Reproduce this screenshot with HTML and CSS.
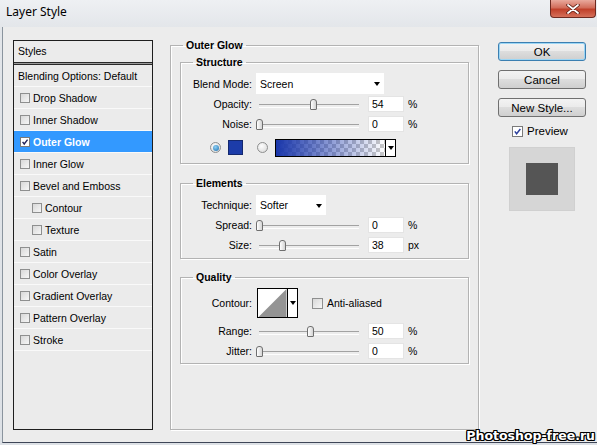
FILE: index.html
```html
<!DOCTYPE html>
<html>
<head>
<meta charset="utf-8">
<title>Layer Style</title>
<link rel="stylesheet" href="styles.css">
</head>
<body>
<div class="window">
  <div class="titlebar">
    <span class="title">Layer Style</span>
    <div class="close">
      <svg width="14" height="10" viewBox="0 0 14 10"><path d="M2 1 L12 9 M12 1 L2 9" stroke="#5a1a10" stroke-width="3.4" stroke-linecap="round"/><path d="M2 1 L12 9 M12 1 L2 9" stroke="#fff" stroke-width="1.8" stroke-linecap="round"/></svg>
    </div>
  </div>
  <div class="dialog">
    <div class="styles-panel">
      <div class="sp-head">Styles</div>
      <div class="sp-sep"></div>
      <div class="sp-row plain">Blending Options: Default</div>
      <div class="sp-row"><span class="cb"></span>Drop Shadow</div>
      <div class="sp-row"><span class="cb"></span>Inner Shadow</div>
      <div class="sp-row active"><span class="cb checked"><svg width="10" height="10" viewBox="0 0 10 10"><path d="M2 4.8 L4 7.5 L8.2 2" fill="none" stroke="#23235a" stroke-width="1.7"/></svg></span>Outer Glow</div>
      <div class="sp-row"><span class="cb"></span>Inner Glow</div>
      <div class="sp-row"><span class="cb"></span>Bevel and Emboss</div>
      <div class="sp-row sub"><span class="cb"></span>Contour</div>
      <div class="sp-row sub"><span class="cb"></span>Texture</div>
      <div class="sp-row"><span class="cb"></span>Satin</div>
      <div class="sp-row"><span class="cb"></span>Color Overlay</div>
      <div class="sp-row"><span class="cb"></span>Gradient Overlay</div>
      <div class="sp-row"><span class="cb"></span>Pattern Overlay</div>
      <div class="sp-row"><span class="cb"></span>Stroke</div>
    </div>

    <fieldset class="group main">
      <legend>Outer Glow</legend>
      <fieldset class="group sub structure">
        <legend>Structure</legend>
        <div class="row h21"><span class="lbl">Blend Mode:</span><div class="select blend">Screen<i class="arrow"></i></div></div>
        <div class="row"><span class="lbl">Opacity:</span><div class="slider"><i class="thumb" style="left:54px"></i></div><div class="num">54</div><span class="unit">%</span></div>
        <div class="row"><span class="lbl">Noise:</span><div class="slider"><i class="thumb" style="left:0px"></i></div><div class="num">0</div><span class="unit">%</span></div>
        <div class="row color-row">
          <span class="radio on"></span>
          <span class="swatch"></span>
          <span class="radio"></span>
          <span class="gradient"><span class="grad-fill"></span><span class="grad-arrow"><i class="arrow"></i></span></span>
        </div>
      </fieldset>
      <fieldset class="group sub elements">
        <legend>Elements</legend>
        <div class="row"><span class="lbl">Technique:</span><div class="select tech">Softer<i class="arrow"></i></div></div>
        <div class="row"><span class="lbl">Spread:</span><div class="slider"><i class="thumb" style="left:0px"></i></div><div class="num">0</div><span class="unit">%</span></div>
        <div class="row"><span class="lbl">Size:</span><div class="slider"><i class="thumb" style="left:23px"></i></div><div class="num">38</div><span class="unit">px</span></div>
      </fieldset>
      <fieldset class="group sub quality">
        <legend>Quality</legend>
        <div class="row h30"><span class="lbl">Contour:</span>
          <div class="contour">
            <svg width="30" height="30" viewBox="0 0 30 30"><rect width="30" height="30" fill="#fff"/><polygon points="0,30 30,0 30,30" fill="#949494"/></svg>
            <span class="contour-arrow"><i class="arrow"></i></span>
          </div>
          <span class="cb big"></span><span class="aa">Anti-aliased</span>
        </div>
        <div class="row range"><span class="lbl">Range:</span><div class="slider"><i class="thumb" style="left:51px"></i></div><div class="num">50</div><span class="unit">%</span></div>
        <div class="row"><span class="lbl">Jitter:</span><div class="slider"><i class="thumb" style="left:0px"></i></div><div class="num">0</div><span class="unit">%</span></div>
      </fieldset>
    </fieldset>

    <div class="actions">
      <div class="btn default">OK</div>
      <div class="btn">Cancel</div>
      <div class="btn">New Style...</div>
      <div class="preview-check"><span class="cb big checked"><svg width="11" height="11" viewBox="0 0 11 11"><path d="M2.2 5.4 L4.4 8.2 L9 2.4" fill="none" stroke="#2c3f9c" stroke-width="1.8"/></svg></span>Preview</div>
      <div class="preview-box"><div class="preview-square"></div></div>
    </div>
  </div>
  <div class="watermark">Photoshop-free.ru</div>
</div>
</body>
</html>
```

FILE: styles.css
```css
* { box-sizing: border-box; }
html, body { margin: 0; padding: 0; }
body {
  width: 597px;
  height: 445px;
  overflow: hidden;
  font-family: "Liberation Sans", Arial, sans-serif;
  font-size: 10.5px;
  color: #000;
  background: #e3e6ea;
}
.window {
  width: 597px;
  height: 445px;
  position: relative;
  display: flex;
  flex-direction: column;
  background: linear-gradient(to bottom, #eef0f3 0, #e2e5e9 30px, #dde1e6 100%);
}
.titlebar {
  height: 27px;
  flex: none;
  display: flex;
  align-items: flex-start;
  padding-left: 6px;
}
.title {
  font-family: "Noto Sans", "Liberation Sans", sans-serif;
  font-size: 12px;
  line-height: 24px;
  color: #000;
}
.close {
  margin-left: auto;
  margin-right: 1px;
  width: 46px;
  height: 18px;
  border: 1px solid #6e2a20;
  border-top: none;
  border-radius: 0 0 4px 4px;
  background: linear-gradient(to bottom, #e9a99c 0%, #d26d5a 45%, #c0402a 55%, #d5705a 100%);
  display: flex;
  align-items: center;
  justify-content: center;
}
.dialog {
  flex: 1;
  margin-left: 2px;
  margin-bottom: 2px;
  border-left: 1px solid #8a949e;
  border-bottom: 1px solid #3f4658;
  background: #ececec;
  display: flex;
  align-items: flex-start;
  padding: 13px 0 0 10px;
}

/* Styles list */
.styles-panel {
  width: 140px;
  height: 390px;
  flex: none;
  border: 1px solid #1e1e1e;
  background: #ebebeb;
}
.sp-head {
  height: 21px;
  line-height: 21px;
  padding-left: 4px;
}
.sp-sep {
  height: 3px;
  border-top: 1px solid #2a2a2a;
  border-bottom: 1px solid #2a2a2a;
  background: #9a9a9a;
}
.sp-row {
  height: 22px;
  display: flex;
  align-items: center;
  padding-left: 6px;
  border-bottom: 1px solid #f9f9f9;
  white-space: nowrap;
}
.sp-row.plain { padding-left: 4px; }
.sp-row.sub { padding-left: 18px; }
.sp-row.active {
  background: #3399ff;
  color: #fff;
  font-weight: bold;
}
.cb {
  width: 10px;
  height: 10px;
  flex: none;
  margin-right: 3px;
  border: 1px solid #8e8f8f;
  background: linear-gradient(135deg, #d8d8d8, #f6f6f6);
  display: inline-flex;
  align-items: center;
  justify-content: center;
}
.cb.checked { background: #fff; border-color: #7a7a7a; }
.cb.big { width: 11px; height: 11px; }

/* Group boxes */
fieldset.group {
  margin: 0;
  border: 1px solid #b3b3b3;
  box-shadow: 1px 1px 0 #fff, inset 1px 1px 0 #fff;
  min-width: 0;
}
fieldset.group > legend {
  font-weight: bold;
  line-height: 14px;
  height: 14px;
  padding: 0 3px;
}
fieldset.main {
  width: 309px;
  flex: none;
  margin-top: -2px;
  margin-left: 17px;
  padding: 0 9px 65px 9px;
}
fieldset.main > legend { margin-left: 3px; }
fieldset.sub {
  width: 289px;
  padding: 0;
}
fieldset.sub > legend { margin-left: 12px; }
fieldset.structure { margin-top: 3px; padding: 4px 0 2px 0; }
fieldset.elements { margin-top: 12px; padding: 5px 0 3px 0; }
fieldset.quality { margin-top: 11px; padding: 4px 0 2px 0; }

.row {
  height: 20px;
  display: flex;
  align-items: center;
}
.row.h21 { height: 21px; }
.row.h30 { height: 30px; }
.row.range { margin-top: 3px; }
.lbl {
  width: 71px;
  flex: none;
  text-align: right;
  margin-right: 4px;
  white-space: nowrap;
}
.select {
  position: relative;
  height: 20px;
  background: #fff;
  display: flex;
  align-items: center;
  padding-left: 4px;
}
.select.blend { width: 128px; height: 21px; }
.select.tech { width: 70px; }
.arrow {
  width: 0;
  height: 0;
  border-left: 3.5px solid transparent;
  border-right: 3.5px solid transparent;
  border-top: 4px solid #000;
  display: block;
}
.select .arrow { position: absolute; right: 4px; top: 9px; }

.slider {
  position: relative;
  width: 106px;
  height: 14px;
  margin-right: 6px;
  flex: none;
}
.slider::before {
  content: "";
  position: absolute;
  left: 3px;
  right: 3px;
  top: 7px;
  height: 2px;
  border-top: 1px solid #a2a2a2;
  border-bottom: 1px solid #fdfdfd;
}
.thumb {
  position: absolute;
  top: 2px;
  width: 7px;
  height: 11px;
  border: 1px solid #6f6f6f;
  border-radius: 3px 3px 1px 1px;
  background: linear-gradient(to right, #ffffff, #d4d4d4);
}
.num {
  width: 36px;
  height: 16px;
  flex: none;
  background: #fff;
  border: 1px solid #e4e4e4;
  line-height: 14px;
  padding-left: 3px;
}
.unit { margin-left: 4px; }

.color-row { height: 27px; padding-left: 29px; }
.radio {
  width: 11px;
  height: 11px;
  border-radius: 50%;
  border: 1px solid #8e8f8f;
  background: radial-gradient(circle at 40% 35%, #fdfdfd, #d6d6d6);
  flex: none;
  display: flex;
  align-items: center;
  justify-content: center;
}
.radio.on::after {
  content: "";
  width: 6px;
  height: 6px;
  border-radius: 50%;
  background: radial-gradient(circle at 40% 35%, #8fd0f5, #1b6fae);
}
.swatch {
  width: 15px;
  height: 15px;
  margin-left: 7px;
  margin-right: 14px;
  background: #1c3ca9;
  border: 1px solid #14286e;
  flex: none;
}
.gradient {
  margin-left: 7px;
  width: 121px;
  height: 18px;
  border: 1px solid #000;
  display: flex;
  flex: none;
}
.grad-fill {
  flex: 1;
  background:
    linear-gradient(to right, #1a37ab, rgba(26, 55, 171, 0)),
    repeating-conic-gradient(#c8c8c8 0 25%, #ffffff 0 50%) 0 0 / 8px 8px;
}
.grad-arrow {
  width: 10px;
  border-left: 1px solid #000;
  background: #fff;
  display: flex;
  align-items: center;
  justify-content: center;
}

.contour {
  display: flex;
  width: 41px;
  height: 30px;
  margin-left: 1px;
  border: 1px solid #000;
  background: #fff;
  flex: none;
}
.contour svg { display: block; width: 29px; height: 28px; }
.contour-arrow {
  width: 10px;
  border-left: 1px solid #000;
  display: flex;
  align-items: center;
  justify-content: center;
}
.h30 .cb.big { margin-left: 14px; margin-right: 4px; }

/* Right column */
.actions {
  width: 88px;
  flex: none;
  margin-left: 19px;
  margin-top: 2px;
  display: flex;
  flex-direction: column;
  align-items: center;
  font-size: 11.5px;
}
.btn {
  width: 88px;
  height: 19px;
  border: 1px solid #707070;
  border-radius: 3px;
  background: linear-gradient(to bottom, #f3f3f3 0%, #ebebeb 45%, #dddddd 50%, #cfcfcf 100%);
  display: flex;
  align-items: center;
  justify-content: center;
  margin-bottom: 9px;
}
.btn.default {
  border-color: #3c7fb1;
  box-shadow: inset 0 0 0 1px #9bd6f5;
}
.preview-check {
  display: flex;
  align-items: center;
  margin-top: -2px;
  height: 14px;
  align-self: flex-start;
  margin-left: 14px;
}
.preview-check .cb { margin-right: 4px; background: #fff; }
.preview-box {
  width: 66px;
  height: 64px;
  margin-top: 9px;
  background: #d6d6d6;
  border: 1px solid #d0d0d0;
  display: flex;
  align-items: center;
  justify-content: center;
}
.preview-square {
  width: 32px;
  height: 32px;
  background: #555555;
}

.watermark {
  position: absolute;
  right: 2px;
  bottom: 3px;
  font-family: "DejaVu Sans", sans-serif;
  font-weight: bold;
  font-size: 12.5px;
  line-height: 13px;
  color: #fff;
  letter-spacing: 0;
  text-shadow: 1px 0 0 #000, -1px 0 0 #000, 0 1px 0 #000, 0 -1px 0 #000, 1px 1px 0 #000, -1px -1px 0 #000, 1px -1px 0 #000, -1px 1px 0 #000;
}
```
